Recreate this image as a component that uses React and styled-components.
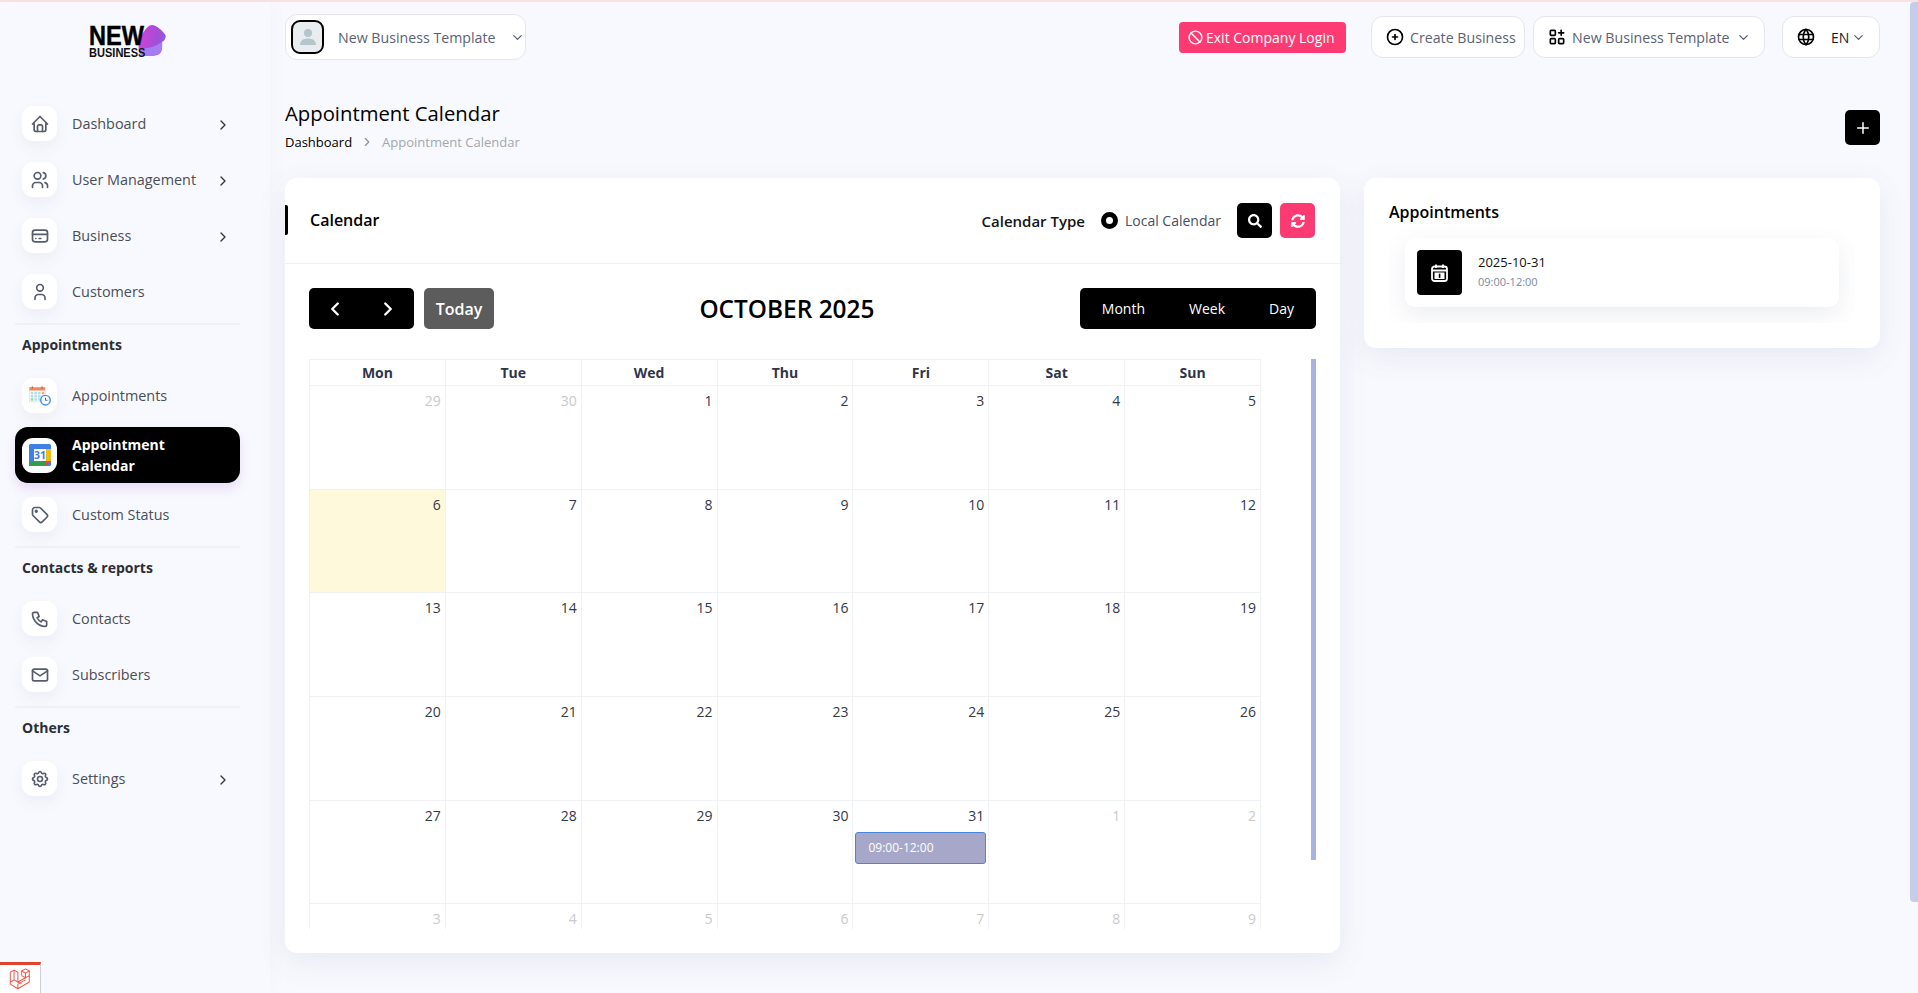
import React from "react";
import styled, { createGlobalStyle } from "styled-components";
import {
  TbApps,
  TbBan,
  TbChevronDown,
  TbChevronLeft,
  TbChevronRight,
  TbCirclePlus,
  TbCreditCard,
  TbHome,
  TbMail,
  TbPhone,
  TbPlus,
  TbSettings,
  TbTag,
  TbUser,
  TbUsers,
  TbWorld,
} from "react-icons/tb";
import { FaSearch, FaSyncAlt } from "react-icons/fa";

const GlobalStyle = createGlobalStyle`
  html, body {
    margin: 0;
    padding: 0;
    height: 100%;
    overflow: hidden;
    background: #f8f9fe;
  }
  * {
    box-sizing: border-box;
  }
  body {
    font-family: "Open Sans", "Liberation Sans", sans-serif;
    font-size: 14px;
  }
`;

const AppointmentsIcon = () => (
  <svg width="22" height="20" viewBox="0 0 24 21">
    <rect x="0.5" y="1" width="17" height="16" fill="#fbfbfb" stroke="#f0c3ae" strokeWidth="0.5" />
    <rect x="0.5" y="1" width="17" height="3.5" fill="#ee8a5f" />
    <rect x="3" y="0" width="1.4" height="2.5" fill="#c8643c" />
    <rect x="13.5" y="0" width="1.4" height="2.5" fill="#c8643c" />
    {[2, 6, 10, 14].map((x) =>
      [6, 9.5, 13].map((y) => (
        <rect
          key={`${x}-${y}`}
          x={x}
          y={y}
          width="2.6"
          height="2.6"
          fill={y === 13 && x < 6 ? "#8ed6b0" : x === 14 && y === 6 ? "#f2a98a" : "#a9dfe9"}
        />
      ))
    )}
    <circle cx="18" cy="15" r="5.2" fill="#fff" stroke="#3f93ee" strokeWidth="1.6" />
    <path d="M18 12.4V15.2H20.2" fill="none" stroke="#2c5e9e" strokeWidth="1" />
  </svg>
);

const GoogleCalendarIcon = () => (
  <svg width="22" height="22" viewBox="0 0 22 22">
    <rect x="0" y="0" width="22" height="22" rx="1.5" fill="#3f7fe8" />
    <rect x="17" y="5" width="5" height="12" fill="#f6bb12" />
    <rect x="0" y="17" width="17" height="5" fill="#2f9e4f" />
    <path d="M17 17H22L17 22Z" fill="#e8483a" />
    <rect x="5" y="5" width="12" height="12" fill="#fff" />
    <text x="11" y="15" fontSize="10.5" fontWeight="700" textAnchor="middle" fill="#3f7fe8" fontFamily="Open Sans, sans-serif">
      31
    </text>
  </svg>
);

const DayCalendarIcon = () => (
  <svg width="17" height="18" viewBox="0 0 17 18" fill="none">
    <rect x="1" y="2.5" width="15" height="14.5" rx="2.5" stroke="#fff" strokeWidth="1.8" />
    <path d="M5 0.5V4M12 0.5V4M1 6.5H16" stroke="#fff" strokeWidth="1.8" />
    <rect x="3.5" y="8.5" width="10" height="6.5" fill="#fff" />
    <rect x="7.8" y="9.7" width="1.6" height="4.2" fill="#000" />
  </svg>
);

const LaravelIcon = () => (
  <svg width="22" height="22" viewBox="0 0 50 52" fill="none" stroke="#f4574a" strokeWidth="2.4" strokeLinejoin="round">
    <path d="M2 10L11 5L20 10V33L38 23V12L47 7L38 2L29 7V18" />
    <path d="M2 10V38L20 49L47 33V7M11 5V28L2 33M20 33L11 28M20 49V38L38 28M20 33L29 38M29 18L38 23L47 18M29 7L38 12" />
  </svg>
);

const AvatarGlyph = () => (
  <svg width="20" height="20" viewBox="0 0 20 20" fill="#b4c5cc">
    <circle cx="10" cy="6" r="4" />
    <path d="M2 18C2 13.5 5.5 11.5 10 11.5C14.5 11.5 18 13.5 18 18Z" />
  </svg>
);

const Logo = () => (
  <LogoWrap>
    <LogoBlob viewBox="0 0 29 31">
      <defs>
        <linearGradient id="blobFill" x1="0" y1="0.3" x2="1" y2="0.5">
          <stop offset="0" stopColor="#d83fd6" />
          <stop offset="0.7" stopColor="#a04fd8" />
          <stop offset="1" stopColor="#9a58d8" />
        </linearGradient>
      </defs>
      <path d="M15 0C19 0 26 6 28.5 10C29.5 13 27 16 25 17C25.5 23 25 29 20 30C14 31.5 6 31 3 29C0 22 2 14 6 8C9 3 12 0 15 0Z" fill="url(#blobFill)" />
      <path d="M2 24C8 24 18 22 25 17C25.5 23 25 29 20 30C14 31.5 6 31 3 29Z" fill="#a67cf2" />
    </LogoBlob>
    <LogoNew>NEW</LogoNew>
    <LogoBusiness>BUSINESS</LogoBusiness>
  </LogoWrap>
);

const MainNav = [
  { label: "Dashboard", icon: <TbHome />, more: true },
  { label: "User Management", icon: <TbUsers />, more: true },
  { label: "Business", icon: <TbCreditCard />, more: true },
  { label: "Customers", icon: <TbUser /> },
];

const Sections = [
  {
    title: "Appointments",
    items: [
      { label: "Appointments", icon: <AppointmentsIcon /> },
      { label: "Appointment Calendar", icon: <GoogleCalendarIcon />, active: true },
      { label: "Custom Status", icon: <TbTag /> },
    ],
  },
  {
    title: "Contacts & reports",
    items: [
      { label: "Contacts", icon: <TbPhone /> },
      { label: "Subscribers", icon: <TbMail /> },
    ],
  },
  {
    title: "Others",
    items: [{ label: "Settings", icon: <TbSettings />, more: true }],
  },
];

const WeekDays = ["Mon", "Tue", "Wed", "Thu", "Fri", "Sat", "Sun"];

// six rows, Monday first; the last row is cut off by the scroller
const buildDays = () => {
  const days = [
    { n: 29, out: true },
    { n: 30, out: true },
  ];
  for (let n = 1; n <= 31; n++) days.push({ n, today: n === 6, event: n === 31 ? "09:00-12:00" : null });
  for (let n = 1; n <= 9; n++) days.push({ n, out: true });
  return days;
};

function NavLink({ item }) {
  return (
    <NavItem $active={item.active}>
      <IconBox>{item.icon}</IconBox>
      <NavLabel $active={item.active}>{item.label}</NavLabel>
      {item.more && (
        <NavArrow>
          <TbChevronRight />
        </NavArrow>
      )}
    </NavItem>
  );
}

function App() {
  return (
    <>
      <GlobalStyle />
      <TopLine />
      <Page>
        <Sidebar>
          <LogoArea>
            <Logo />
          </LogoArea>
          {MainNav.map((item) => (
            <NavLink key={item.label} item={item} />
          ))}
          {Sections.map((section) => (
            <Section key={section.title}>
              <SectionTitle>{section.title}</SectionTitle>
              {section.items.map((item) => (
                <NavLink key={item.label} item={item} />
              ))}
            </Section>
          ))}
        </Sidebar>

        <Main>
          <Header>
            <PillSelect>
              <Avatar>
                <AvatarGlyph />
              </Avatar>
              <PillText>New Business Template</PillText>
              <PillCaret>
                <TbChevronDown />
              </PillCaret>
            </PillSelect>
            <HeaderRight>
              <ExitButton>
                <TbBan />
                Exit Company Login
              </ExitButton>
              <CreatePill>
                <PillIcon>
                  <TbCirclePlus />
                </PillIcon>
                <PillText>Create Business</PillText>
              </CreatePill>
              <TemplatePill>
                <PillIcon>
                  <TbApps />
                </PillIcon>
                <PillText>New Business Template</PillText>
                <PillCaret>
                  <TbChevronDown />
                </PillCaret>
              </TemplatePill>
              <LangPill>
                <PillIcon>
                  <TbWorld />
                </PillIcon>
                <LangText>EN</LangText>
                <PillCaret>
                  <TbChevronDown />
                </PillCaret>
              </LangPill>
            </HeaderRight>
          </Header>

          <TitleRow>
            <div>
              <PageTitle>Appointment Calendar</PageTitle>
              <Breadcrumb>
                <span>Dashboard</span>
                <TbChevronRight />
                <CrumbCurrent>Appointment Calendar</CrumbCurrent>
              </Breadcrumb>
            </div>
            <AddButton>
              <TbPlus />
            </AddButton>
          </TitleRow>

          <Columns>
            <CalendarCard>
              <CardHeader>
                <CardTitle>Calendar</CardTitle>
                <CardTools>
                  <TypeLabel>Calendar Type</TypeLabel>
                  <RadioDot />
                  <RadioText>Local Calendar</RadioText>
                  <IconButton $color="#000">
                    <FaSearch />
                  </IconButton>
                  <IconButton $color="#fd3a72">
                    <FaSyncAlt />
                  </IconButton>
                </CardTools>
              </CardHeader>
              <CardBody>
                <Toolbar>
                  <ToolGroup>
                    <NavButtons>
                      <NavButton>
                        <TbChevronLeft />
                      </NavButton>
                      <NavButton>
                        <TbChevronRight />
                      </NavButton>
                    </NavButtons>
                    <TodayButton>Today</TodayButton>
                  </ToolGroup>
                  <MonthTitle>OCTOBER 2025</MonthTitle>
                  <ViewButtons>
                    <ViewButton>Month</ViewButton>
                    <ViewButton>Week</ViewButton>
                    <ViewButton>Day</ViewButton>
                  </ViewButtons>
                </Toolbar>
                <Scroller>
                  <MonthGrid>
                    {WeekDays.map((d) => (
                      <WeekHead key={d}>{d}</WeekHead>
                    ))}
                    {buildDays().map((day, i) => (
                      <DayCell key={i} $today={day.today}>
                        <DayNumber $out={day.out}>{day.n}</DayNumber>
                        {day.event && <EventChip>{day.event}</EventChip>}
                      </DayCell>
                    ))}
                  </MonthGrid>
                  <ScrollBar />
                </Scroller>
              </CardBody>
            </CalendarCard>

            <AsideCard>
              <AsideTitle>Appointments</AsideTitle>
              <AppointmentList>
                <AppointmentRow>
                  <AppointmentIcon>
                    <DayCalendarIcon />
                  </AppointmentIcon>
                  <AppointmentText>
                    <AppointmentDate>2025-10-31</AppointmentDate>
                    <AppointmentTime>09:00-12:00</AppointmentTime>
                  </AppointmentText>
                </AppointmentRow>
              </AppointmentList>
            </AsideCard>
          </Columns>
        </Main>
      </Page>
      <PageScrollThumb />
      <LaravelBadge>
        <LaravelIcon />
      </LaravelBadge>
    </>
  );
}

export default App;

const TopLine = styled.div`
  height: 2px;
  background: #f9e3e0;
`;

const Page = styled.div`
  display: flex;
  height: 991px;
`;

const Sidebar = styled.aside`
  width: 270px;
  flex-shrink: 0;
  padding: 0 30px 0 15px;
  box-shadow: 4px 0 14px rgba(120, 130, 170, 0.03);
`;

const LogoArea = styled.div`
  height: 97px;
  padding: 23px 0 0 74px;
`;

const LogoWrap = styled.div`
  position: relative;
  width: 77px;
  height: 33px;
`;

const LogoBlob = styled.svg`
  position: absolute;
  left: 48px;
  top: 0;
  width: 29px;
  height: 31px;
`;

const LogoNew = styled.div`
  position: relative;
  font-family: "Liberation Sans", sans-serif;
  font-weight: 700;
  font-size: 28px;
  line-height: 22px;
  color: #000;
  -webkit-text-stroke: 0.5px #000;
  transform: scaleX(0.84);
  transform-origin: left;
`;

const LogoBusiness = styled.div`
  position: relative;
  font-family: "Liberation Sans", sans-serif;
  font-weight: 700;
  font-size: 12px;
  line-height: 12px;
  color: #111;
  transform: scaleX(0.92);
  transform-origin: left;
  white-space: nowrap;
`;

const NavItem = styled.div`
  display: flex;
  align-items: center;
  gap: 15px;
  width: 225px;
  min-height: 49px;
  margin-bottom: 7px;
  padding: 7px 9px 7px 7px;
  border-radius: 13px;
  color: ${(p) => (p.$active ? "#fff" : "#4a4e57")};
  background: ${(p) => (p.$active ? "#000" : "transparent")};
  font-weight: ${(p) => (p.$active ? 700 : 500)};
  box-shadow: ${(p) => (p.$active ? "0 6px 12px rgba(170, 90, 210, 0.18)" : "none")};
`;

const IconBox = styled.div`
  width: 35px;
  height: 35px;
  flex-shrink: 0;
  display: flex;
  align-items: center;
  justify-content: center;
  background: #fff;
  border-radius: 11px;
  box-shadow: 0 7px 16px rgba(60, 70, 110, 0.06);
  color: #565c6e;
  font-size: 20px;
`;

const NavLabel = styled.span`
  flex: 1;
  font-size: ${(p) => (p.$active ? "14px" : "14.4px")};
  line-height: 21px;
`;

const NavArrow = styled.span`
  display: flex;
  font-size: 16px;
  color: #33363e;
  margin-top: 2px;
`;

const Section = styled.section`
  border-top: 2px solid #f1f1f4;
`;

const SectionTitle = styled.h4`
  margin: 0 0 0 7px;
  height: 46px;
  padding-top: 10px;
  font-size: 14px;
  line-height: 20px;
  font-weight: 700;
  color: #2b2e36;
`;

const Main = styled.main`
  flex: 1;
  min-width: 0;
  padding: 0 38px 0 15px;
`;

const Header = styled.header`
  display: flex;
  align-items: center;
  justify-content: space-between;
  height: 46px;
  margin-top: 12px;
`;

const HeaderRight = styled.div`
  display: flex;
  align-items: center;
  gap: 8px;
`;

const Pill = styled.div`
  display: flex;
  align-items: center;
  height: 42px;
  padding: 0 8px 0 13px;
  background: #fff;
  border: 1px solid #e5e6ec;
  border-radius: 12px;
`;

const PillSelect = styled(Pill)`
  height: 46px;
  width: 241px;
  padding: 0 7px 0 5px;
  gap: 14px;
`;

const CreatePill = styled(Pill)`
  width: 154px;
  margin-left: 17px;
`;

const TemplatePill = styled(Pill)`
  width: 232px;
`;

const LangPill = styled(Pill)`
  width: 98px;
  margin-left: 9px;
`;

const Avatar = styled.div`
  width: 33px;
  height: 34px;
  flex-shrink: 0;
  display: flex;
  align-items: center;
  justify-content: center;
  background: #e9edef;
  border: 2px solid #000;
  border-radius: 9px;
`;

const PillIcon = styled.span`
  display: flex;
  font-size: 20px;
  color: #000;
  margin-right: 5px;
`;

const PillText = styled.span`
  color: #5a6275;
  font-size: 14.2px;
  white-space: nowrap;
`;

const LangText = styled.span`
  color: #1b1d22;
  font-size: 14px;
  margin-left: 10px;
`;

const PillCaret = styled.span`
  display: flex;
  margin-left: auto;
  padding-right: 5px;
  font-size: 15px;
  color: #5a6275;
`;

const ExitButton = styled.button`
  display: flex;
  align-items: center;
  gap: 2px;
  height: 31px;
  width: 167px;
  padding: 0 8px;
  border: 0;
  border-radius: 4px;
  background: #fd3a72;
  color: #fff;
  font-family: inherit;
  font-size: 14px;
  font-weight: 500;
  white-space: nowrap;

  svg {
    font-size: 17px;
  }
`;

const TitleRow = styled.div`
  display: flex;
  justify-content: space-between;
  margin-top: 40px;
`;

const PageTitle = styled.h1`
  margin: 0;
  font-size: 20.3px;
  line-height: 27px;
  font-weight: 500;
  color: #000;
`;

const Breadcrumb = styled.div`
  display: flex;
  align-items: center;
  gap: 7px;
  margin-top: 6px;
  font-size: 13px;
  line-height: 18px;
  color: #000;

  svg {
    font-size: 14px;
    color: #8d919a;
    margin: 0 1px;
  }
`;

const CrumbCurrent = styled.span`
  color: #a3a6ae;
`;

const AddButton = styled.button`
  width: 35px;
  height: 35px;
  margin-top: 10px;
  padding: 0;
  display: flex;
  align-items: center;
  justify-content: center;
  background: #000;
  border: 0;
  border-radius: 5px;
  color: #fff;
  font-size: 18px;
`;

const Columns = styled.div`
  display: grid;
  grid-template-columns: 1055px 516px;
  gap: 24px;
  align-items: start;
  margin-top: 27px;
`;

const Card = styled.div`
  background: #fff;
  border-radius: 12px;
  box-shadow: 0 9px 30px rgba(90, 100, 150, 0.1);
`;

const CalendarCard = styled(Card)`
  height: 775px;
`;

const CardHeader = styled.div`
  position: relative;
  display: flex;
  align-items: center;
  justify-content: space-between;
  height: 86px;
  padding: 0 25px;
  border-bottom: 1px solid #f0f1f4;

  &::before {
    content: "";
    position: absolute;
    left: 0;
    top: 27px;
    width: 3px;
    height: 30px;
    background: #000;
    border-radius: 0 2px 2px 0;
  }
`;

const CardTitle = styled.h5`
  margin: 0 0 2px;
  font-size: 16px;
  font-weight: 600;
  color: #000;
`;

const CardTools = styled.div`
  display: flex;
  align-items: center;
`;

const TypeLabel = styled.span`
  font-size: 15px;
  font-weight: 600;
  color: #141519;
  margin-right: 16px;
`;

const RadioDot = styled.span`
  width: 17px;
  height: 17px;
  border: 5px solid #000;
  border-radius: 50%;
  background: #fff;
  margin-right: 7px;
`;

const RadioText = styled.span`
  font-size: 14px;
  color: #454f66;
  margin-right: 16px;
`;

const IconButton = styled.button`
  width: 35px;
  height: 35px;
  margin-left: ${(p) => (p.$color === "#000" ? "0" : "8px")};
  padding: 0;
  display: flex;
  align-items: center;
  justify-content: center;
  background: ${(p) => p.$color};
  border: 0;
  border-radius: 5px;
  color: #fff;
  font-size: 14px;
`;

const CardBody = styled.div`
  padding: 24px 24px 0;
`;

const Toolbar = styled.div`
  display: flex;
  align-items: center;
  justify-content: space-between;
  height: 41px;
  margin-bottom: 30px;
`;

const ToolGroup = styled.div`
  display: flex;
  gap: 10px;
`;

const NavButtons = styled.div`
  display: flex;
  height: 41px;
  background: #000;
  border-radius: 5px;
`;

const NavButton = styled.button`
  width: 52.5px;
  padding: 0;
  display: flex;
  align-items: center;
  justify-content: center;
  background: transparent;
  border: 0;
  color: #fff;
  font-size: 22px;

  svg {
    stroke-width: 2.6;
  }
`;

const TodayButton = styled.button`
  width: 70px;
  height: 41px;
  padding: 0;
  background: #5c5c5c;
  border: 0;
  border-radius: 5px;
  color: #fff;
  font-family: inherit;
  font-size: 16px;
  font-weight: 600;
`;

const MonthTitle = styled.h2`
  margin: 0;
  font-size: 24.4px;
  font-weight: 600;
  color: #000;
`;

const ViewButtons = styled.div`
  display: flex;
  height: 41px;
  background: #000;
  border-radius: 5px;
`;

const ViewButton = styled.button`
  padding: 0 22px;
  background: transparent;
  border: 0;
  color: #fff;
  font-family: inherit;
  font-size: 14px;
  font-weight: 500;
`;

const Scroller = styled.div`
  display: flex;
  justify-content: space-between;
  height: 570px;
  overflow: hidden;
`;

const MonthGrid = styled.div`
  display: grid;
  grid-template-columns: repeat(7, 135.86px);
  grid-auto-rows: 103.7px;
  grid-template-rows: 26px;
  width: 952px;
  border-top: 1px solid #f0f1f4;
  border-left: 1px solid #f0f1f4;
`;

const WeekHead = styled.div`
  border-right: 1px solid #f0f1f4;
  border-bottom: 1px solid #f0f1f4;
  text-align: center;
  font-size: 14px;
  line-height: 25px;
  font-weight: 700;
  color: #30354a;
`;

const DayCell = styled.div`
  border-right: 1px solid #f0f1f4;
  border-bottom: 1px solid #f0f1f4;
  background: ${(p) => (p.$today ? "#fef9da" : "transparent")};
`;

const DayNumber = styled.div`
  padding: 5px 4px 0 0;
  height: 31px;
  text-align: right;
  font-size: 14px;
  line-height: 20px;
  color: ${(p) => (p.$out ? "#c9cacd" : "#333849")};
`;

const EventChip = styled.div`
  height: 32px;
  margin: 0 2px;
  padding-left: 12px;
  background: #a7a8c9;
  border: 1px solid #4a86d8;
  border-radius: 3px;
  color: #fff;
  font-size: 12px;
  line-height: 29px;
`;

const ScrollBar = styled.div`
  width: 5px;
  height: 501px;
  background: #a9b3e3;
`;

const AsideCard = styled(Card)`
  height: 170px;
  padding: 24px 25px 25px;
`;

const AsideTitle = styled.h5`
  margin: 0;
  font-size: 16px;
  line-height: 20px;
  font-weight: 600;
  color: #000;
`;

const AppointmentList = styled.div`
  height: 101px;
  padding: 16px;
  overflow: hidden;
`;

const AppointmentRow = styled.div`
  display: flex;
  align-items: center;
  gap: 16px;
  padding: 12px;
  background: #fff;
  border-radius: 10px;
  box-shadow: 0 8px 24px rgba(70, 80, 120, 0.1);
`;

const AppointmentIcon = styled.div`
  width: 45px;
  height: 45px;
  display: flex;
  align-items: center;
  justify-content: center;
  background: #000;
  border-radius: 4px;
`;

const AppointmentText = styled.div`
  margin-bottom: 4px;
`;

const AppointmentDate = styled.div`
  font-size: 13px;
  line-height: 18px;
  font-weight: 500;
  color: #111;
`;

const AppointmentTime = styled.div`
  margin-top: 3px;
  font-size: 11px;
  line-height: 15px;
  color: #8089a0;
`;

const PageScrollThumb = styled.div`
  position: fixed;
  top: 2px;
  right: 0;
  width: 8px;
  height: 900px;
  background: #c6cced;
  border-radius: 4px 0 0 4px;
`;

const LaravelBadge = styled.div`
  position: fixed;
  left: 0;
  bottom: 0;
  width: 41px;
  height: 31px;
  display: flex;
  align-items: center;
  justify-content: center;
  background: #fff;
  border-top: 3px solid #e0442c;
  border-right: 1px solid #d0d0d0;
`;
